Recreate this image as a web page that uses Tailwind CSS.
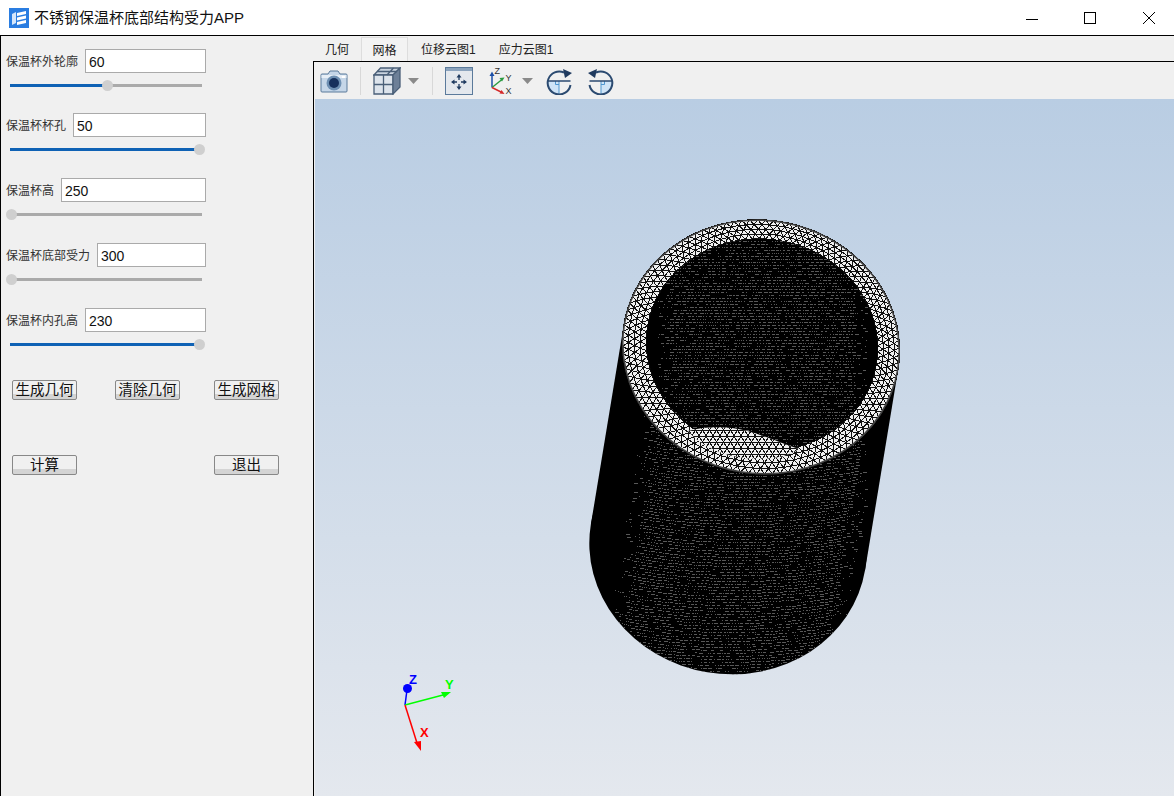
<!DOCTYPE html>
<html lang="zh">
<head>
  <meta charset="UTF-8" />
  <title>不锈钢保温杯底部结构受力APP</title>
  <script src="https://cdn.jsdelivr.net/npm/@tailwindcss/browser@4"></script>
</head>
<body class="w-[1174px] h-[796px] overflow-hidden bg-[#f0f0f0] font-['Liberation_Sans','Noto_Sans_CJK_SC',sans-serif] text-[#111]">

  <!-- 标题栏 -->
  <header class="h-9 bg-white border-b border-black flex items-center pl-[9px]">
    <svg width="20" height="20" viewBox="0 0 20 20" class="shrink-0">
      <rect width="20" height="20" fill="#2a7de1"/>
      <path d="M3 6l4-2v11l-4 2z" fill="#d6e7fb"/>
      <path d="M8 5l9-2v3l-9 2zM8 9.500l9-2v3l-9 2zM8 14l9-2v3l-9 2z" fill="#fff"/>
    </svg>
    <span class="ml-[5px] text-[15px] leading-none">不锈钢保温杯底部结构受力APP</span>
    <div class="ml-auto flex items-center h-full text-black">
      <svg width="14" height="14" viewBox="0 0 14 14" class="mr-[44px]"><path d="M1 8.500h12" stroke="#000" stroke-width="1"/></svg>
      <svg width="14" height="14" viewBox="0 0 14 14" class="mr-[45px]"><rect x="1.500" y="1.500" width="11" height="11" fill="none" stroke="#000"/></svg>
      <svg width="14" height="14" viewBox="0 0 14 14" class="mr-[18px]"><path d="M1 1l12 12M13 1L1 13" stroke="#000" stroke-width="1"/></svg>
    </div>
  </header>

  <main class="flex h-[760px]">
    <!-- 参数面板 -->
    <aside class="w-[313px] shrink-0 border-l border-black pl-[5px] pt-[13px] text-[12px] leading-none">
      <div class="h-[64px]">
        <div class="flex items-center h-6 w-[200px] gap-[7px]"><span class="mt-[2px] text-[#333] whitespace-nowrap">保温杯外轮廓</span><input value="60" class="flex-1 min-w-0 h-6 bg-white border border-[#aaa] pl-[3px] pt-[2px] text-[14px] outline-none" /></div>
        <div class="relative mt-[11px] ml-[4px] w-[192px] h-[3px] bg-[#aaa]"><div class="h-full w-[97px] bg-[#0f62b5]"></div><div class="absolute top-[-4px] left-[92px] w-[11px] h-[11px] rounded-full bg-[#cfcfcf]"></div></div>
      </div>
      <div class="h-[65px]">
        <div class="flex items-center h-6 w-[200px] gap-[7px]"><span class="mt-[2px] text-[#333] whitespace-nowrap">保温杯杯孔</span><input value="50" class="flex-1 min-w-0 h-6 bg-white border border-[#aaa] pl-[3px] pt-[2px] text-[14px] outline-none" /></div>
        <div class="relative mt-[11px] ml-[4px] w-[192px] h-[3px] bg-[#aaa]"><div class="h-full w-[187px] bg-[#0f62b5]"></div><div class="absolute top-[-4px] left-[184px] w-[11px] h-[11px] rounded-full bg-[#cfcfcf]"></div></div>
      </div>
      <div class="h-[65px]">
        <div class="flex items-center h-6 w-[200px] gap-[7px]"><span class="mt-[2px] text-[#333] whitespace-nowrap">保温杯高</span><input value="250" class="flex-1 min-w-0 h-6 bg-white border border-[#aaa] pl-[3px] pt-[2px] text-[14px] outline-none" /></div>
        <div class="relative mt-[11px] ml-[4px] w-[192px] h-[3px] bg-[#aaa]"><div class="absolute top-[-4px] left-[-4px] w-[11px] h-[11px] rounded-full bg-[#cfcfcf]"></div></div>
      </div>
      <div class="h-[65px]">
        <div class="flex items-center h-6 w-[200px] gap-[7px]"><span class="mt-[2px] text-[#333] whitespace-nowrap">保温杯底部受力</span><input value="300" class="flex-1 min-w-0 h-6 bg-white border border-[#aaa] pl-[3px] pt-[2px] text-[14px] outline-none" /></div>
        <div class="relative mt-[11px] ml-[4px] w-[192px] h-[3px] bg-[#aaa]"><div class="absolute top-[-4px] left-[-4px] w-[11px] h-[11px] rounded-full bg-[#cfcfcf]"></div></div>
      </div>
      <div class="h-[72px]">
        <div class="flex items-center h-6 w-[200px] gap-[7px]"><span class="mt-[2px] text-[#333] whitespace-nowrap">保温杯内孔高</span><input value="230" class="flex-1 min-w-0 h-6 bg-white border border-[#aaa] pl-[3px] pt-[2px] text-[14px] outline-none" /></div>
        <div class="relative mt-[11px] ml-[4px] w-[192px] h-[3px] bg-[#aaa]"><div class="h-full w-[187px] bg-[#0f62b5]"></div><div class="absolute top-[-4px] left-[184px] w-[11px] h-[11px] rounded-full bg-[#cfcfcf]"></div></div>
      </div>

      <div class="flex ml-[6px]">
        <button class="w-[65px] h-5 rounded-[2px] border border-[#888] bg-gradient-to-b from-[#f0f0f0] from-70% to-[#d4d4d4] to-70% text-[14.500px] leading-none whitespace-nowrap">生成几何</button>
        <button class="ml-[38px] w-[65px] h-5 rounded-[2px] border border-[#888] bg-gradient-to-b from-[#f0f0f0] from-70% to-[#d4d4d4] to-70% text-[14.500px] leading-none whitespace-nowrap">清除几何</button>
        <button class="ml-[34px] w-[65px] h-5 rounded-[2px] border border-[#888] bg-gradient-to-b from-[#f0f0f0] from-70% to-[#d4d4d4] to-70% text-[14.500px] leading-none whitespace-nowrap">生成网格</button>
      </div>
      <div class="flex ml-[6px] mt-[55px]">
        <button class="w-[65px] h-5 rounded-[2px] border border-[#888] bg-gradient-to-b from-[#f0f0f0] from-70% to-[#d4d4d4] to-70% text-[14.500px] leading-none">计算</button>
        <button class="ml-[137px] w-[65px] h-5 rounded-[2px] border border-[#888] bg-gradient-to-b from-[#f0f0f0] from-70% to-[#d4d4d4] to-70% text-[14.500px] leading-none">退出</button>
      </div>
    </aside>

    <!-- 右侧 -->
    <section class="flex-1 min-w-0 flex flex-col">
      <nav class="h-[25px] flex items-end text-[12px] leading-none text-[#222]">
        <span class="ml-[12px] w-[24px] h-[17px] whitespace-nowrap">几何</span>
        <span class="ml-[12px] w-[47px] h-6 border border-b-0 border-[#ddd] bg-[#f3f3f3] flex justify-center pt-[7px]">网格</span>
        <span class="ml-[13px] h-[17px] whitespace-nowrap">位移云图1</span>
        <span class="ml-[23px] h-[17px] whitespace-nowrap">应力云图1</span>
      </nav>
      <div class="flex-1 min-h-0 flex flex-col border-l border-t border-black pl-px">
        <!-- 工具栏 -->
        <div class="h-[37px] shrink-0 flex items-center pl-[5px]">
          <svg width="28" height="26" viewBox="0 0 28 26">
            <path d="M2 6h6l2-3h8l2 3h6q1 0 1 1v16q0 1-1 1H2q-1 0-1-1V7q0-1 1-1z" fill="#c5d6e8" stroke="#5b7a9b"/>
            <rect x="1.500" y="7" width="25" height="3" fill="#e6eef6"/>
            <circle cx="14" cy="15" r="7.500" fill="#6d8fb2"/><circle cx="14" cy="15" r="5" fill="#16305c"/>
            <rect x="22" y="8" width="3" height="2" fill="#fff"/>
          </svg>
          <div class="w-px h-7 bg-[#d8d8d8] ml-[12px]"></div>
          <svg width="28" height="28" viewBox="0 0 28 28" class="ml-[12px]">
            <path d="M1 8L7.500 1H27L20 8z" fill="#c9d3df" stroke="#4a5f78" stroke-width="1.300"/>
            <path d="M1 8h19v19H1z" fill="#dde4ec" stroke="#4a5f78" stroke-width="1.300"/>
            <path d="M20 8l7-7v19l-7 7z" fill="#6d8098" stroke="#4a5f78" stroke-width="1.300"/>
            <path d="M1 17.500h19M10.500 8v19M14 8l6.500-7M4 4.500h20" stroke="#4a5f78" stroke-width="1.300" fill="none"/>
          </svg>
          <svg width="11" height="6" viewBox="0 0 11 6" class="ml-[7px]"><path d="M0 0h11L5.500 6z" fill="#8a8a8a"/></svg>
          <div class="w-px h-7 bg-[#d8d8d8] ml-[13px]"></div>
          <svg width="28" height="28" viewBox="0 0 28 28" class="ml-[12px]">
            <rect x=".500" y=".500" width="27" height="27" fill="#e4e8ed" stroke="#5b7a9b"/>
            <rect x="1" y="1" width="26" height="3" fill="#8ba3bd"/>
            <path d="M14 10v3M14 17v3M9 15h3M16 15h3" stroke="#1f3a5f" stroke-width="1.300"/>
            <path d="M14 7l-2.500 3.500h5zM14 23l-2.500-3.500h5zM6 15l3.500-2.500v5zM22 15l-3.500-2.500v5z" fill="#1f3a5f"/>
          </svg>
          <svg width="24" height="28" viewBox="0 0 24 28" class="ml-[16px]">
            <path d="M3 20.500V8" stroke="#1c4fa8" stroke-width="1.500"/><path d="M3 4.500l-2.500 4.500h5z" fill="#1c4fa8"/>
            <path d="M3 20.500l10-8" stroke="#2a9a3f" stroke-width="1.500"/><path d="M15.500 10.500l-5 .5 2.500 3.500z" fill="#2a9a3f"/>
            <path d="M3 20.500l10 5" stroke="#d52a2a" stroke-width="1.500"/><path d="M15.500 27l-5-.5 2-3.500z" fill="#d52a2a"/>
            <text x="5.500" y="7" font-size="9" font-family="Liberation Sans" fill="#333">Z</text>
            <text x="16.500" y="14" font-size="9" font-family="Liberation Sans" fill="#333">Y</text>
            <text x="16.500" y="27" font-size="9" font-family="Liberation Sans" fill="#333">X</text>
          </svg>
          <svg width="11" height="6" viewBox="0 0 11 6" class="ml-[9px]"><path d="M0 0h11L5.500 6z" fill="#8a8a8a"/></svg>
          <svg width="27" height="28" viewBox="0 0 27 28" class="ml-[13px]">
            <path d="M13 14H1.500A11.500 11.500 0 0 0 13 28z" fill="#cfe4f7"/>
            <path d="M9.500 14v3.500H13M13 14v13" fill="none" stroke="#4f97d0"/>
            <path d="M1.500 14h23" stroke="#2b4a70" stroke-width="1.500"/>
            <path d="M24.500 18A11.500 11.500 0 1 1 18 5.500" fill="none" stroke="#2b4a70" stroke-width="2"/>
            <path d="M17 2l9 4-7 5z" fill="#1f3a5f"/>
          </svg>
          <svg width="27" height="28" viewBox="0 0 27 28" class="ml-[14px]">
            <path d="M14 14h11.500A11.500 11.500 0 0 1 14 28z" fill="#cfe4f7"/>
            <path d="M17.500 14v3.500H14M14 14v13" fill="none" stroke="#4f97d0"/>
            <path d="M2.500 14h23" stroke="#2b4a70" stroke-width="1.500"/>
            <path d="M2.500 18A11.500 11.500 0 1 0 9 5.500" fill="none" stroke="#2b4a70" stroke-width="2"/>
            <path d="M10 2L1 6l7 5z" fill="#1f3a5f"/>
          </svg>
        </div>

        <!-- 三维视图 -->
        <div class="flex-1 min-h-0 relative bg-gradient-to-b from-[#b9cde3] to-[#e4e8ee]">
          <svg id="view" class="absolute inset-0" width="859" height="697" viewBox="315 99 859 697"></svg>
        </div>
      </div>
    </section>
  </main>

  <script>
    // 网格是按几何算出来的，不是贴图
    const NS = "http://www.w3.org/2000/svg";
    const view = document.getElementById("view");
    const TILT = 9.4 * Math.PI / 180;
    const deg = 9.4;

    function ell(c, t) {
      const x = c[2] * Math.cos(t), y = c[3] * Math.sin(t);
      return [c[0] + x * Math.cos(TILT) - y * Math.sin(TILT), c[1] + x * Math.sin(TILT) + y * Math.cos(TILT)];
    }
    function add(tag, attrs, parent) {
      const el = document.createElementNS(NS, tag);
      for (const k in attrs) el.setAttribute(k, attrs[k]);
      (parent || view).appendChild(el);
      return el;
    }
    function ellipse(c, attrs, parent) {
      return add("ellipse", Object.assign({ cx: c[0], cy: c[1], rx: c[2], ry: c[3], transform: "rotate(" + deg + " " + c[0] + " " + c[1] + ")" }, attrs), parent);
    }
    let seed = 7;
    function rnd() { seed = (seed * 16807) % 2147483647; return seed / 2147483647; }

    const outer = [761, 347, 139, 127], inner = [762, 345, 116, 106], base = [728, 547, 139, 127];
    const bodyD = "M623.900 324.300L590.900 524.300L865.100 569.700L898.100 369.700Z";
    const bumpD = "M688 431C705 426 720 427 732 428C752 430 775 441 799 449C775 466 715 462 688 431Z";

    const defs = add("defs", {});
    const cBody = add("clipPath", { id: "cBody" }, defs);
    add("path", { d: bodyD }, cBody);
    ellipse(base, {}, cBody);
    ellipse(inner, {}, add("clipPath", { id: "cHole" }, defs));
    add("path", { d: bumpD }, add("clipPath", { id: "cBump" }, defs));

    // 密网格缩小后只剩灰点，按行画短划线
    function speckle(x0, x1, y0, y1, cx, slope, half, black, bow) {
      let d = "";
      for (let y = y0; y < y1; y += 3) {
        let x = x0;
        while (x < x1) {
          const u = Math.abs(x - (cx + (y - y0) * slope)) / half;
          const keep = u > black ? 0 : u > black - .1 ? .3 : .8;
          const len = rnd() < .5 ? 1 : 2 + Math.floor(rnd() * 3);
          const yy = Math.round(y + bow * Math.sqrt(Math.max(0, 1 - u * u)));
          if (rnd() < keep) d += "M" + x + " " + (yy + .5) + "h" + len;
          x += len + 1 + Math.floor(rnd() * 2);
        }
      }
      return d;
    }
    const dots = { stroke: "#585858", "stroke-width": 1, fill: "none", "shape-rendering": "crispEdges" };

    // 圆柱外表面
    add("path", { d: bodyD, fill: "#000" });
    ellipse(base, { fill: "#000" });
    add("path", Object.assign({ d: speckle(591, 866, 320, 680, 775, -.165, 137, .86, 24), "clip-path": "url(#cBody)" }, dots));

    // 顶面环
    ellipse(outer, { fill: "#efefef" });
    let mesh = "";
    const N = 108, L = 4, step = 2 * Math.PI / N;
    const pt = (l, t) => {
      const a = ell(inner, t), b = ell(outer, t), g = l / L;
      return (a[0] + (b[0] - a[0]) * g).toFixed(1) + " " + (a[1] + (b[1] - a[1]) * g).toFixed(1);
    };
    for (let l = 0; l <= L; l++) {
      for (let i = 0; i < N; i++) {
        const t = (i + (l % 2) * .5) * step, p = pt(l, t);
        mesh += "M" + p + "L" + pt(l, t + step);
        if (l < L) mesh += "M" + p + "L" + pt(l + 1, t - step / 2) + "M" + p + "L" + pt(l + 1, t + step / 2);
      }
    }
    add("path", { d: mesh, stroke: "#111", "stroke-width": 1, fill: "none", "shape-rendering": "crispEdges" });
    ellipse([761, 347, 138.5, 126.5], { fill: "none", stroke: "#444", "stroke-width": 1.5 });

    // 内孔
    ellipse(inner, { fill: "#000" });
    add("path", Object.assign({ d: speckle(646, 878, 238, 453, 762, 0, 116, .9, 0), "clip-path": "url(#cHole)" }, dots));

    // 孔底露出的实体部分
    add("path", { d: bumpD, fill: "#efefef" });
    let bump = "";
    for (let r = 0; r < 9; r++) {
      const y = 424 + r * 6;
      bump += "M680 " + y + "H805";
      for (let c = 0; c < 22; c++) {
        const x = 678 + c * 7 + (r % 2) * 3.5;
        bump += "M" + x + " " + y + "l3.500 6M" + x + " " + y + "l-3.500 6";
      }
    }
    add("path", { d: bump, stroke: "#111", "stroke-width": 1, fill: "none", "shape-rendering": "crispEdges", "clip-path": "url(#cBump)" });

    // 坐标轴
    const tri = add("g", { "font-family": "Liberation Sans", "font-weight": 700, "font-size": 13 });
    add("path", { d: "M405 705L407 690", stroke: "#0000ff", "stroke-width": 1.5 }, tri);
    add("circle", { cx: 407.5, cy: 688.5, r: 4.5, fill: "#0000ff" }, tri);
    add("path", { d: "M405 705L443 695", stroke: "#00ff00", "stroke-width": 1.5 }, tri);
    add("path", { d: "M451 692L441 692L444 698Z", fill: "#00ff00" }, tri);
    add("path", { d: "M405 705L417 743", stroke: "#ff0000", "stroke-width": 1.5 }, tri);
    add("path", { d: "M421 751L414 742L421 741Z", fill: "#ff0000" }, tri);
    add("text", { x: 409, y: 684, fill: "#0000ff" }, tri).textContent = "Z";
    add("text", { x: 445, y: 689, fill: "#00ff00" }, tri).textContent = "Y";
    add("text", { x: 420, y: 737, fill: "#ff0000" }, tri).textContent = "X";
  </script>
</body>
</html>
